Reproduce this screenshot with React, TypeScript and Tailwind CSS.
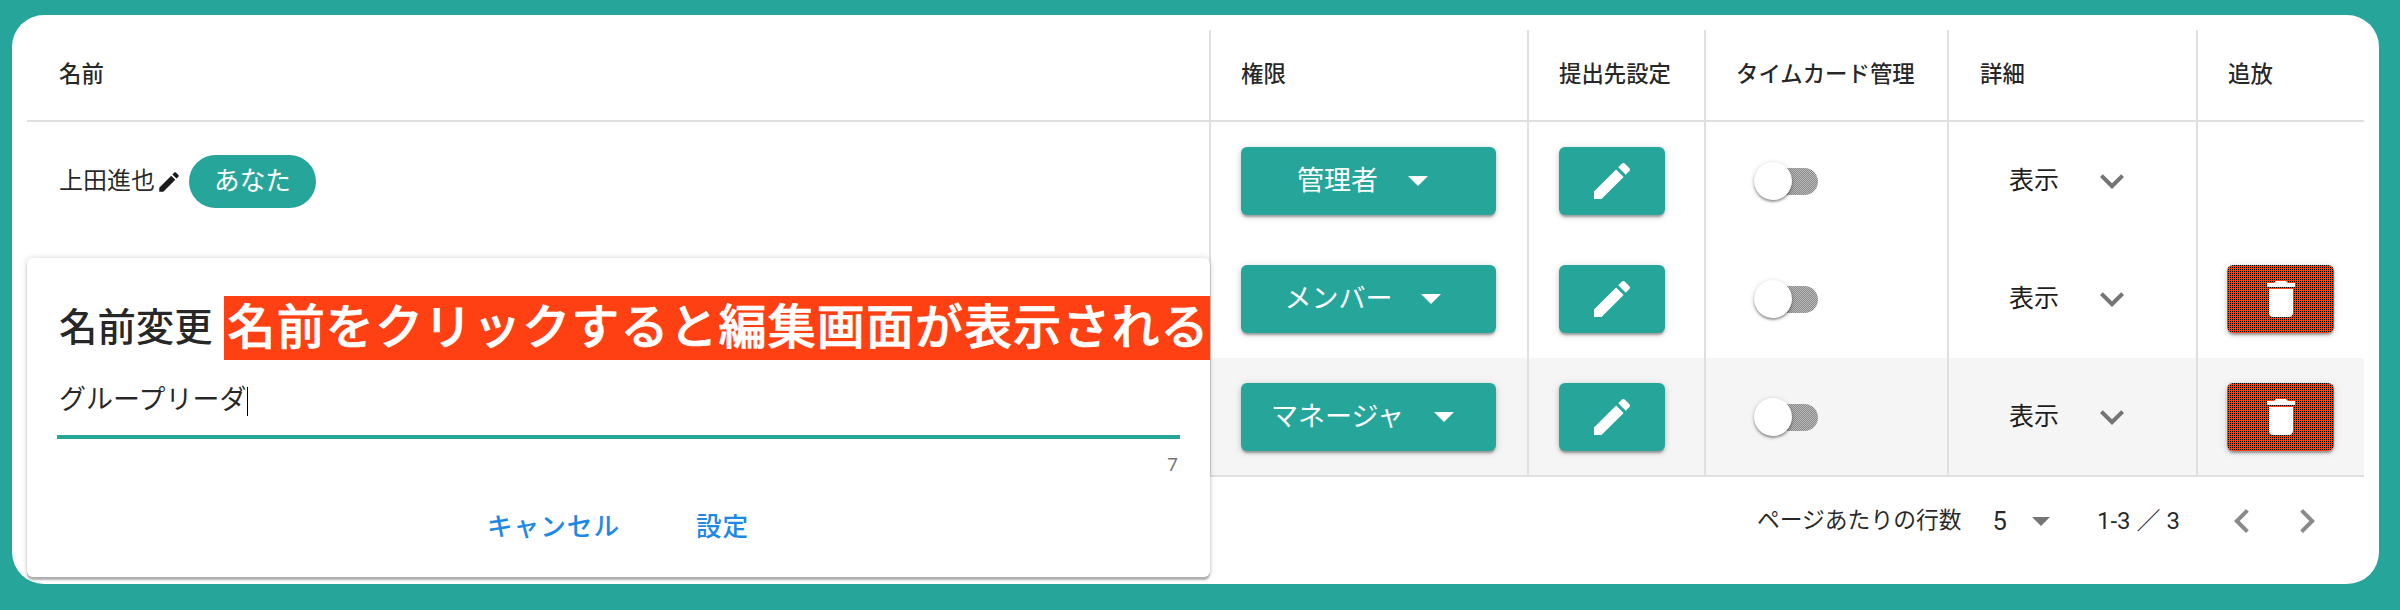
import React from "react";

const EDIT = "M3 17.25V21h3.75L17.81 9.94l-3.75-3.75L3 17.25zM20.71 7.04c.39-.39.39-1.02 0-1.41l-2.34-2.34c-.39-.39-1.02-.39-1.41 0l-1.83 1.83 3.75 3.75 1.83-1.83z";
const TRASH = "M6 19c0 1.1.9 2 2 2h8c1.1 0 2-.9 2-2V7H6v12zM19 4h-3.5l-1-1h-5l-1 1H5v2h14V4z";
const MORE = "M16.59 8.59L12 13.17 7.41 8.59 6 10l6 6 6-6z";
const LEFT = "M15.41 7.41L14 6l-6 6 6 6 1.41-1.41L10.83 12z";
const RIGHT = "M10 6L8.59 7.41 13.17 12l-4.58 4.59L10 18l6-6z";

function Icon({ d, className }: { d: string; className: string }) {
  return (
    <svg viewBox="0 0 24 24" className={className} fill="currentColor">
      <path d={d} />
    </svg>
  );
}

const shadow = "shadow-[0_3px_2px_-1px_rgba(0,0,0,.25),0_2px_4px_0_rgba(0,0,0,.14),0_1px_8px_0_rgba(0,0,0,.12)]";
const cols = "grid grid-cols-[1182px_318px_177px_243px_249px_168px]";
const cell = "border-l-2 border-[#e0e0e0] flex items-center";

function Row({ role, gap, del, grey, children }: { role: string; gap: string; del: boolean; grey?: boolean; children?: React.ReactNode }) {
  return (
    <div className={`${cols} h-[118px] ${grey ? "bg-[#f5f5f5]" : ""}`}>
      <div className="flex items-center pl-[32px]">{children}</div>
      <div className={`${cell} pl-[30px]`}>
        <div className={`w-[255px] h-[68px] rounded-[6px] bg-[#26a69a] text-white text-[27px] flex items-center justify-center pr-[12px] ${shadow}`}>
          <span>{role}</span>
          <span className={`${gap} w-0 h-0 border-x-[10px] border-x-transparent border-t-[10px] border-t-white`} />
        </div>
      </div>
      <div className={`${cell} pl-[30px]`}>
        <div className={`w-[106px] h-[68px] rounded-[6px] bg-[#26a69a] text-white flex items-center justify-center ${shadow}`}>
          <Icon d={EDIT} className="w-[48px] h-[48px]" />
        </div>
      </div>
      <div className={`${cell} pl-[48px]`}>
        <div className="relative w-[64px] h-[38px] flex items-center">
          <div className="ml-[8px] w-[56px] h-[27px] rounded-full bg-[conic-gradient(#888_25%,#bbb_0_50%,#888_0_75%,#bbb_0)] bg-[length:2px_2px]" />
          <div className="absolute left-0 top-0 w-[38px] h-[38px] rounded-full bg-white shadow-[0_2px_2px_0_rgba(0,0,0,.3),0_1px_5px_0_rgba(0,0,0,.2)]" />
        </div>
      </div>
      <div className={`${cell} pl-[60px]`}>
        <span className="text-[25px] text-black/90 w-[51px] whitespace-nowrap">表示</span>
        <Icon d={MORE} className="w-[48px] h-[48px] text-[#757575] ml-[28px]" />
      </div>
      <div className={`${cell} pl-[29px]`}>
        {del && (
          <div className={`w-[107px] h-[68px] rounded-[6px] bg-[conic-gradient(#000_25%,#ff4013_0)] bg-[length:2px_2px] text-white flex items-center justify-center ${shadow}`}>
            <Icon d={TRASH} className="w-[48px] h-[48px]" />
          </div>
        )}
      </div>
    </div>
  );
}

export default function App() {
  return (
    <div className="h-[610px] bg-[#26a69a] pt-[15px] pl-[12px] [font-family:Roboto,'Noto_Sans_CJK_JP',sans-serif] text-black/85 overflow-hidden">
      <div className="relative w-[2367px] h-[569px] bg-white rounded-[32px] pt-[15px] pl-[15px]">
        <div className="w-[2337px]">
          <div className={`${cols} h-[92px] border-b-2 border-[#e0e0e0] text-[22.4px] font-medium`}>
            <div className="flex items-center pl-[32px]">名前</div>
            <div className={`${cell} pl-[30px]`}>権限</div>
            <div className={`${cell} pl-[30px]`}>提出先設定</div>
            <div className={`${cell} pl-[30px]`}>タイムカード管理</div>
            <div className={`${cell} pl-[31px]`}>詳細</div>
            <div className={`${cell} pl-[30px]`}>追放</div>
          </div>
          <Row role="管理者" gap="ml-[30px]" del={false}>
            <span className="text-[24px]">上田進也</span>
            <Icon d={EDIT} className="w-[26px] h-[26px] text-[#1a1a1a] ml-[1px] mt-[2px]" />
            <span className="ml-[7px] w-[127px] h-[53px] rounded-full bg-[#26a69a] text-white text-[25.6px] flex items-center justify-center">あなた</span>
          </Row>
          <Row role="メンバー" gap="ml-[28px]" del={true} />
          <Row role="マネージャ" gap="ml-[30px]" del={true} grey />
          <div className="border-t-2 border-[#e0e0e0] h-[90px] flex items-center justify-end text-[22.8px] pr-[33px] -mt-px">
            <span>ページあたりの行数</span>
            <span className="text-[25.6px] ml-[31px]">5</span>
            <span className="ml-[25px] w-0 h-0 border-x-[9px] border-x-transparent border-t-[9px] border-t-[#757575]" />
            <span className="ml-[47px] text-[24px]">1-3 ／ 3</span>
            <Icon d={LEFT} className="w-[48px] h-[48px] text-[#8a8a8a] ml-[38px]" />
            <Icon d={RIGHT} className="w-[48px] h-[48px] text-[#8a8a8a] ml-[17px]" />
          </div>
        </div>

        <div className="absolute left-[15px] top-[243px] w-[1183px] h-[319px] bg-white rounded-[6px] shadow-[0_3px_2px_rgba(0,0,0,.28),0_0_6px_rgba(0,0,0,.16)] pt-[38px]">
          <div className="flex items-center h-[64px]">
            <span className="ml-[32px] text-[38.4px] font-medium">名前変更</span>
            <span className="ml-[11px] flex-1 h-[64px] bg-[#ff4013] text-white text-[48px] font-medium [-webkit-text-stroke:0.7px_white] leading-[64px] whitespace-nowrap pl-[4px] tracking-[1.1px]">名前をクリックすると編集画面が表示される</span>
          </div>
          <div className="mx-[30px] mt-[24px] h-[55px] border-b-[4px] border-[#26a69a] text-[27px] pl-[2px] flex items-start leading-[32px]">
            <span>グループリーダ</span>
            <span className="w-px h-[29px] bg-black ml-[1px] mt-[3px]" />
          </div>
          <div className="text-right mr-[32px] text-[19px] text-[#757575] mt-[14px] leading-[24px]">7</div>
          <div className="flex text-[25.6px] font-medium text-[#1e88e5] tracking-[1px] mt-[32px] leading-[36px]">
            <span className="ml-[460px]">キャンセル</span>
            <span className="ml-[76px]">設定</span>
          </div>
        </div>
      </div>
    </div>
  );
}
